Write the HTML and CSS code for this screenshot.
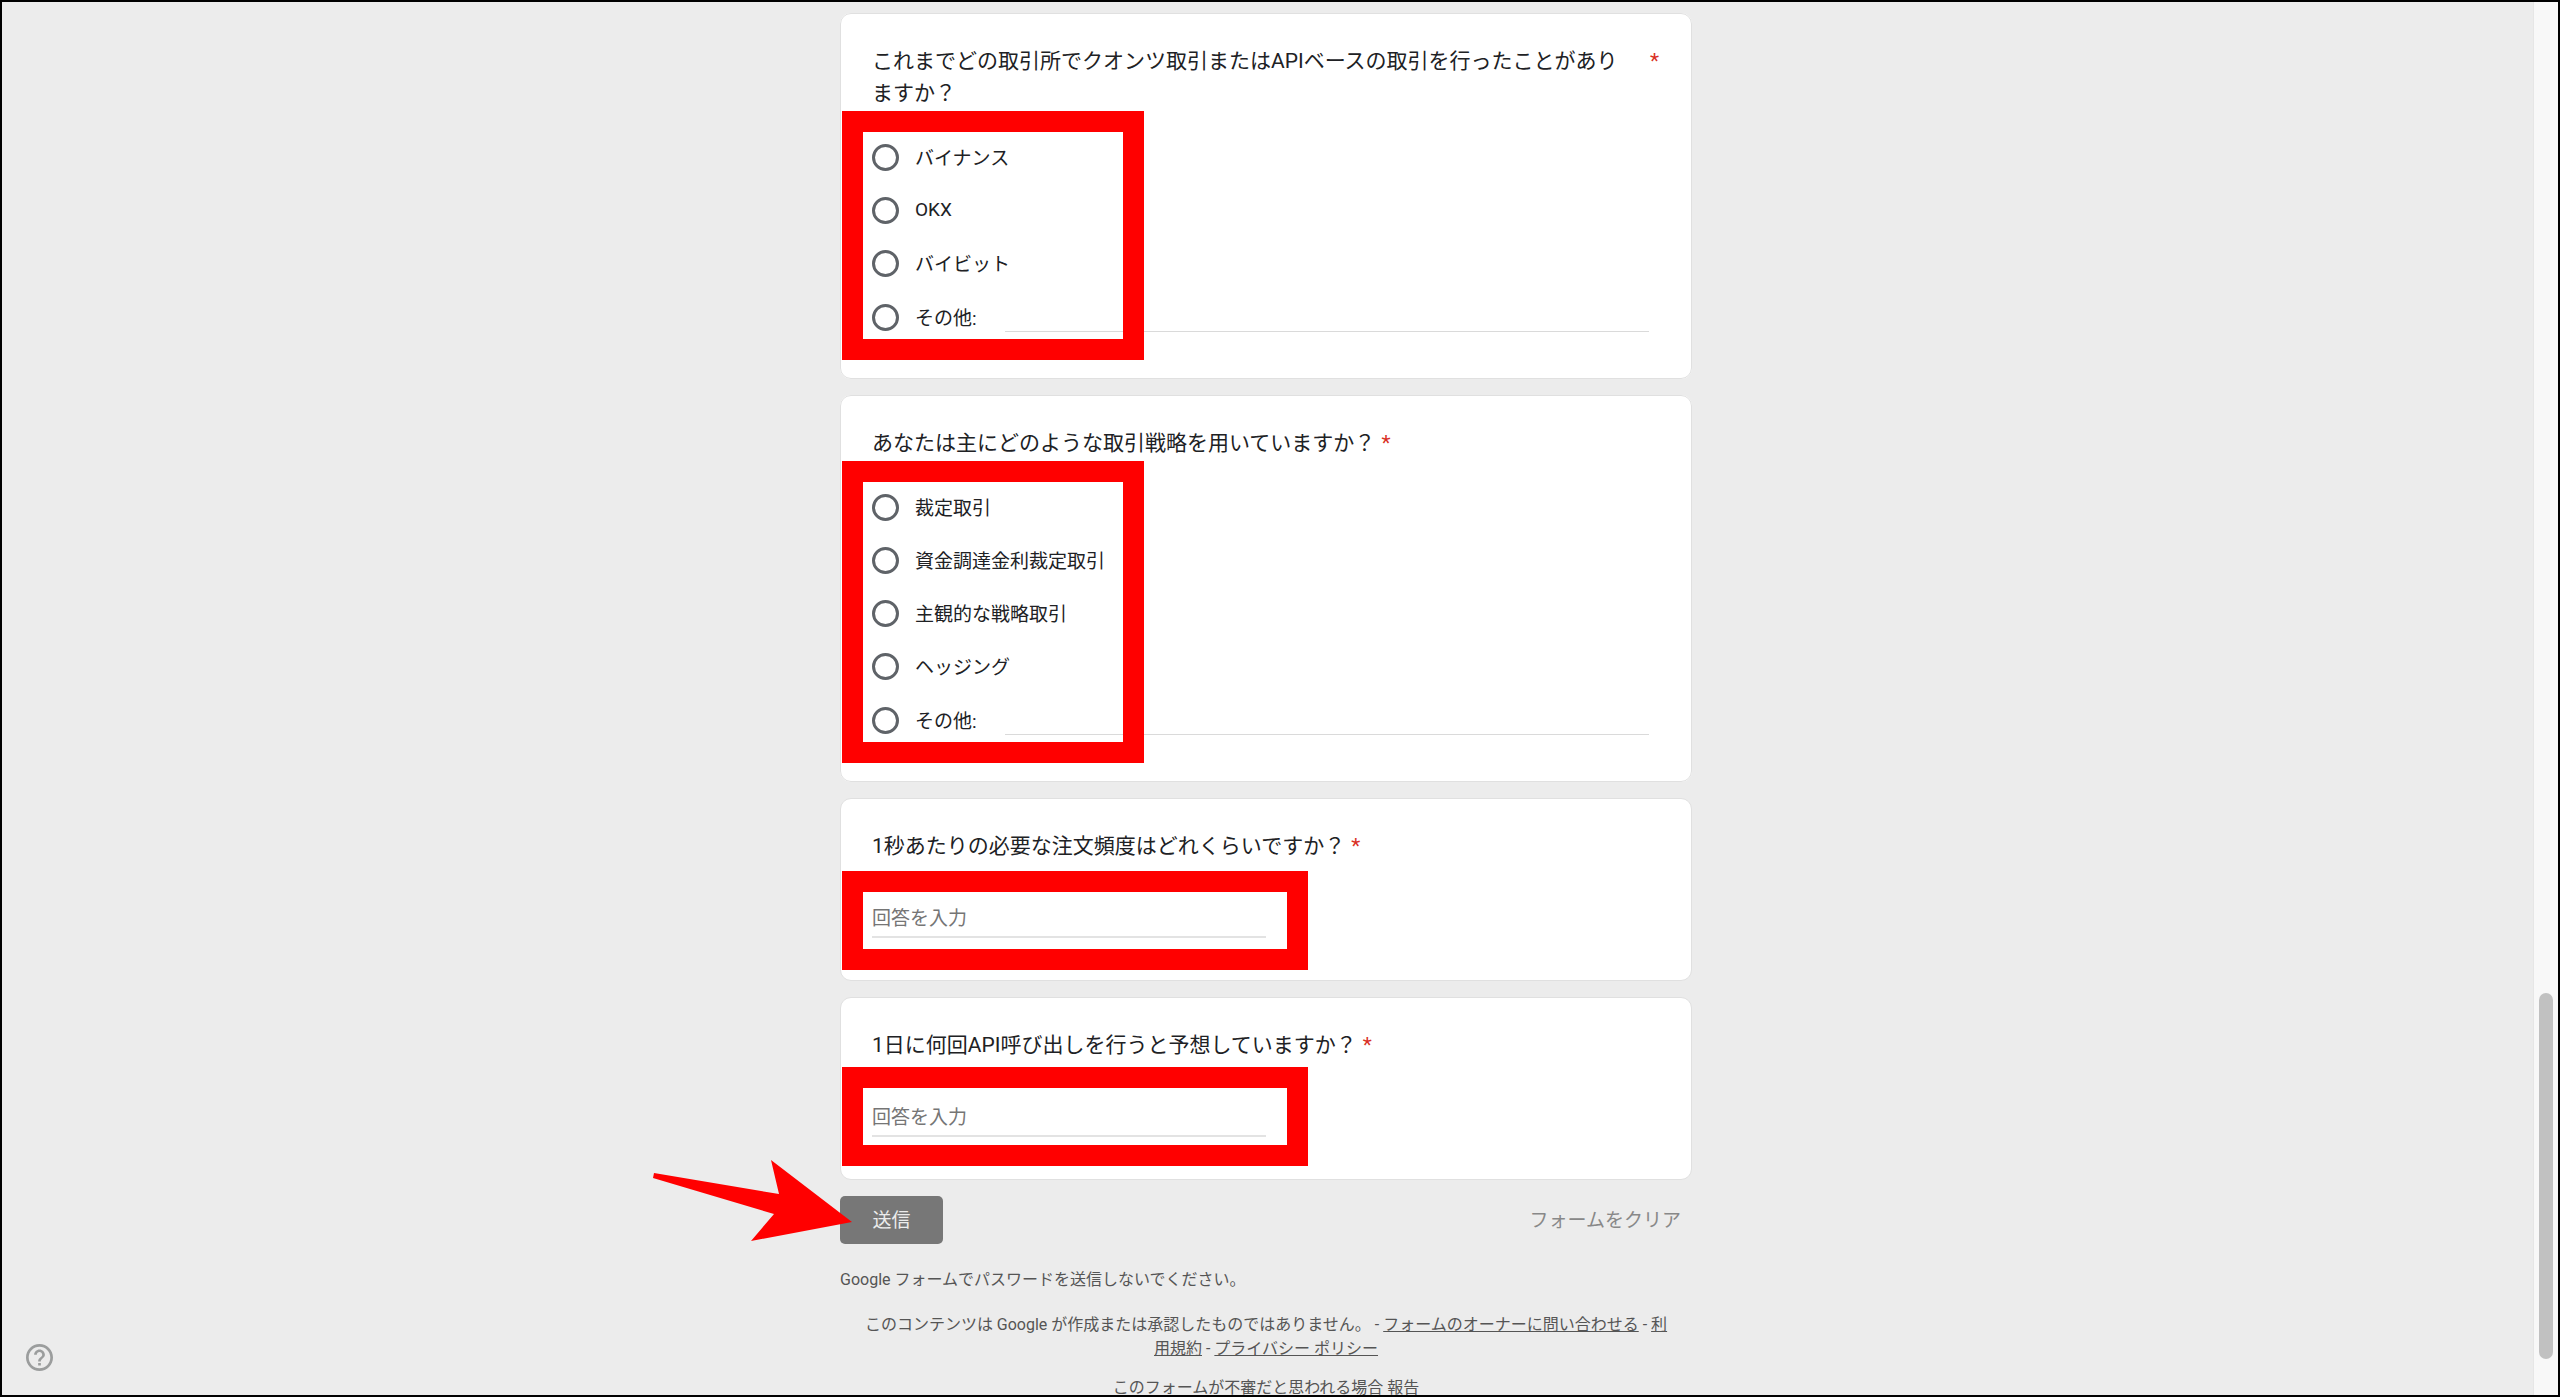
FILE: index.html
```html
<!DOCTYPE html>
<html lang="ja">
<head>
<meta charset="utf-8">
<meta name="viewport" content="width=device-width, initial-scale=1">
<title>フォーム</title>
<link rel="stylesheet" href="styles.css">
</head>
<body>
<div class="window">
  <main class="page">
    <form class="form">
      <fieldset class="card">
        <legend class="title title-full"><span class="title-text">これまでどの取引所でクオンツ取引またはAPIベースの取引を行ったことがあり<br>ますか？</span><span class="required">*</span></legend>
        <div class="options">
          <label class="option"><input class="radio" type="radio" name="exchange"><span class="option-text">バイナンス</span></label>
          <label class="option"><input class="radio" type="radio" name="exchange"><span class="option-text">OKX</span></label>
          <label class="option"><input class="radio" type="radio" name="exchange"><span class="option-text">バイビット</span></label>
          <div class="option option-other"><label class="other-label"><input class="radio" type="radio" name="exchange"><span class="option-text">その他:</span></label><input class="other-input" type="text" aria-label="その他の回答"></div>
        </div>
        <span class="mark mark-options"></span>
      </fieldset>

      <fieldset class="card">
        <legend class="title"><span class="title-text">あなたは主にどのような取引戦略を用いていますか？</span><span class="required">*</span></legend>
        <div class="options">
          <label class="option"><input class="radio" type="radio" name="strategy"><span class="option-text">裁定取引</span></label>
          <label class="option"><input class="radio" type="radio" name="strategy"><span class="option-text">資金調達金利裁定取引</span></label>
          <label class="option"><input class="radio" type="radio" name="strategy"><span class="option-text">主観的な戦略取引</span></label>
          <label class="option"><input class="radio" type="radio" name="strategy"><span class="option-text">ヘッジング</span></label>
          <div class="option option-other"><label class="other-label"><input class="radio" type="radio" name="strategy"><span class="option-text">その他:</span></label><input class="other-input" type="text" aria-label="その他の回答"></div>
        </div>
        <span class="mark mark-options mark-strategy"></span>
      </fieldset>

      <div class="card card-text">
        <label class="title" for="frequency"><span class="title-text">1秒あたりの必要な注文頻度はどれくらいですか？</span><span class="required">*</span></label>
        <input class="answer" id="frequency" type="text" placeholder="回答を入力">
        <span class="mark mark-answer"></span>
      </div>

      <div class="card card-text">
        <label class="title" for="calls"><span class="title-text">1日に何回API呼び出しを行うと予想していますか？</span><span class="required">*</span></label>
        <input class="answer" id="calls" type="text" placeholder="回答を入力">
        <span class="mark mark-answer mark-calls"></span>
      </div>

      <div class="actions">
        <button class="submit" type="submit">送信</button>
        <button class="clear" type="reset">フォームをクリア</button>
        <svg class="arrow" viewBox="0 0 199 82" aria-hidden="true"><path d="M1 13 126 34 118 0 199 62 98 81 121 54 0 18Z"/></svg>
      </div>
    </form>

    <footer class="footer">
      <p class="warning">Google フォームでパスワードを送信しないでください。</p>
      <p class="legal">このコンテンツは Google が作成または承認したものではありません。 - <a href="#">フォームのオーナーに問い合わせる</a> - <a href="#">利用規約</a> - <a href="#">プライバシー ポリシー</a></p>
      <p class="report">このフォームが不審だと思われる場合 <a class="plain" href="#">報告</a></p>
    </footer>

    <button class="help" type="button" aria-label="ヘルプ">
      <svg viewBox="2 2 20 20" aria-hidden="true"><path d="M11 18h2v-2h-2v2zm1-16C6.480 2 2 6.480 2 12s4.480 10 10 10 10-4.480 10-10S17.520 2 12 2zm0 18c-4.410 0-8-3.590-8-8s3.590-8 8-8 8 3.590 8 8-3.590 8-8 8zm0-14c-2.210 0-4 1.790-4 4h2c0-1.100.9-2 2-2s2 .9 2 2c0 2-3 1.750-3 5h2c0-2.250 3-2.500 3-5 0-2.210-1.790-4-4-4z"/></svg>
    </button>
  </main>
  <div class="scrollbar"><div class="thumb"></div></div>
</div>
</body>
</html>
```

FILE: styles.css
```css
* {
  box-sizing: border-box;
}

body {
  margin: 0;
  color: #202124;
  font-family: Roboto, "Noto Sans CJK JP", sans-serif;
  font-size: 19px;
}

.window {
  display: grid;
  grid-template-columns: 1fr 25px;
  height: 100vh;
  border: 2px solid #000;
  overflow: hidden;
}

.page {
  position: relative;
  min-width: 0;
  padding: 11px 3px 0 0;
  overflow: hidden;
  background: #ececec;
}

.form,
.footer {
  max-width: 852px;
  margin: 0 auto;
}

.form {
  display: flex;
  flex-direction: column;
  gap: 16px;
}

.card {
  position: relative;
  display: flex;
  flex-direction: column;
  min-width: 0;
  margin: 0;
  padding: 31px 32px 33px 31px;
  border: 1px solid #e0e0e0;
  border-radius: 11px;
  background: #fff;
}

.card-text {
  padding-bottom: 42px;
}

.title {
  display: flex;
  float: left;
  padding: 0;
  font-size: 21px;
  line-height: 32px;
}

.title-full {
  width: 100%;
}

.title-full .title-text {
  flex: 1;
}

.required {
  padding-left: 6px;
  color: #d93025;
}

.options {
  clear: both;
  padding-top: 22px;
}

.option {
  display: flex;
  align-items: center;
  height: 53px;
}

.option-text {
  padding-bottom: 2px;
}

.option-other {
  height: 55px;
  gap: 28px;
}

.radio {
  flex: none;
  appearance: none;
  width: 27px;
  height: 27px;
  margin: 0 16px 0 0;
  border: 3px solid #5f6368;
  border-radius: 50%;
}

.other-label {
  display: flex;
  align-items: center;
}

.other-input {
  flex: 1;
  min-width: 0;
  height: 28px;
  margin-right: 10px;
  padding: 0;
  border: 0;
  border-bottom: 1px solid #dadada;
  background: none;
  font: inherit;
}

.answer {
  width: 50%;
  height: 39px;
  margin-top: 37px;
  padding: 2px 0 0;
  border: 0;
  border-bottom: 2px solid #e3e3e3;
  background: none;
  font: inherit;
}

.answer::placeholder {
  color: #757575;
}

/* Red frames drawn over the fields to fill in */
.mark {
  position: absolute;
  left: 1px;
  border: 21px solid #f00;
  pointer-events: none;
}

.mark-options {
  top: 97px;
  bottom: 18px;
  width: 302px;
}

.mark-strategy {
  top: 65px;
}

.mark-answer {
  top: 72px;
  width: 466px;
  height: 99px;
}

.mark-calls {
  top: 69px;
}

.actions {
  position: relative;
  display: flex;
  align-items: center;
  justify-content: space-between;
}

.submit,
.clear {
  height: 48px;
  border: 0;
  font: inherit;
}

.submit {
  min-width: 103px;
  padding: 0 32px 3px;
  border-radius: 5px;
  background: #777;
  color: #ececec;
}

.clear {
  padding: 0 11px 3px;
  background: none;
  color: #888;
}

.arrow {
  position: absolute;
  top: -36px;
  left: -187px;
  width: 199px;
  height: 82px;
  fill: #f00;
}

.footer {
  color: #555;
  font-size: 16px;
  line-height: 24px;
}

.footer p {
  margin: 0;
}

.footer .warning {
  padding-top: 24px;
}

.footer .legal {
  padding: 21px 21px 0;
  text-align: center;
}

.footer .report {
  padding-top: 15px;
  text-align: center;
}

.footer a {
  color: inherit;
}

.footer .plain {
  text-decoration: none;
}

.help {
  position: absolute;
  bottom: 24px;
  left: 24px;
  width: 27px;
  height: 27px;
  padding: 0;
  border: 0;
  background: none;
}

.help svg {
  display: block;
  fill: #9b9d9d;
}

.scrollbar {
  display: flex;
  flex-direction: column;
  justify-content: flex-end;
  padding: 0 5px 36px;
  border-left: 1px solid #e6e6e6;
  background: #f8f8f8;
}

.thumb {
  width: 14px;
  height: 27%;
  border-radius: 7px;
  background: #c1c1c1;
}
```
